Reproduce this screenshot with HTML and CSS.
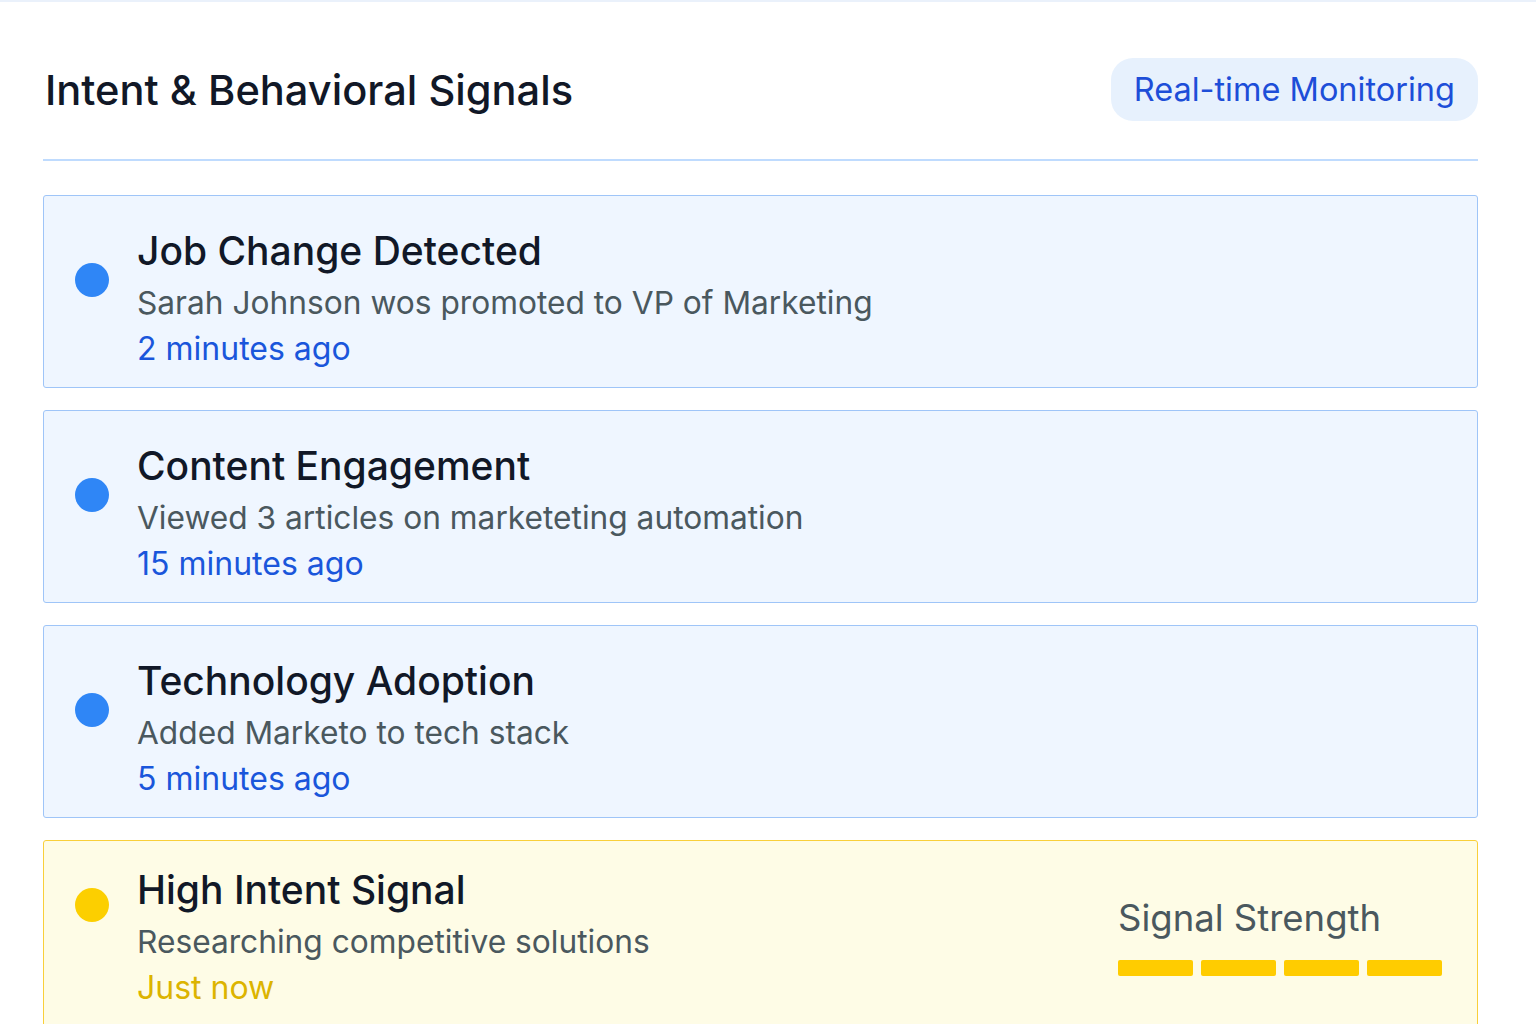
FILE: index.html
```html
<!DOCTYPE html>
<html lang="en">
<head>
    <meta charset="UTF-8">
    <meta name="viewport" content="width=device-width, initial-scale=1.0">
    <title>Intent &amp; Behavioral Signals</title>
    <link rel="stylesheet" href="styles.css">
</head>
<body>
    <div class="panel">
        <div class="panel-header">
            <h1>Intent &amp; Behavioral Signals</h1>
            <span class="badge">Real-time Monitoring</span>
        </div>

        <div class="signal-list">
            <div class="signal">
                <span class="dot"></span>
                <div class="signal-body">
                    <h2>Job Change Detected</h2>
                    <p class="desc">Sarah Johnson wos promoted to VP of Marketing</p>
                    <p class="time">2 minutes ago</p>
                </div>
            </div>

            <div class="signal">
                <span class="dot"></span>
                <div class="signal-body">
                    <h2>Content Engagement</h2>
                    <p class="desc">Viewed 3 articles on marketeting automation</p>
                    <p class="time">15 minutes ago</p>
                </div>
            </div>

            <div class="signal">
                <span class="dot"></span>
                <div class="signal-body">
                    <h2>Technology Adoption</h2>
                    <p class="desc">Added Marketo to tech stack</p>
                    <p class="time">5 minutes ago</p>
                </div>
            </div>

            <div class="signal signal-high">
                <span class="dot"></span>
                <div class="signal-body">
                    <h2>High Intent Signal</h2>
                    <p class="desc">Researching competitive solutions</p>
                    <p class="time">Just now</p>
                </div>
                <div class="strength">
                    <p class="strength-label">Signal Strength</p>
                    <div class="bars">
                        <span class="bar"></span>
                        <span class="bar"></span>
                        <span class="bar"></span>
                        <span class="bar"></span>
                    </div>
                </div>
            </div>
        </div>
    </div>
</body>
</html>
```

FILE: styles.css
```css
body {
    font-family: Inter, "Noto Sans", sans-serif;
    background-color: #ffffff;
    margin: 0;
    border-top: 2px solid #eaf1fb;
}
.panel {
    padding: 56px 58px 0 43px;
}
.panel-header {
    display: flex;
    justify-content: space-between;
    align-items: center;
    padding-bottom: 38px;
    border-bottom: 2px solid #bfdbfe;
}
h1 {
    margin: 0 0 0 2px;
    font-size: 41.6px;
    font-weight: 500;
    color: #111827;
}
.badge {
    background-color: #e7f1fd;
    color: #1d4ed8;
    font-size: 32.5px;
    padding: 12px 23px;
    border-radius: 22px;
}
.signal-list {
    display: flex;
    flex-direction: column;
    gap: 22px;
    margin-top: 34px;
}
.signal {
    display: flex;
    align-items: flex-start;
    padding: 29px 35px 15px 31px;
    background-color: #eff6ff;
    border: 1px solid #9fc5f8;
    border-radius: 3px;
}
.dot {
    flex: none;
    width: 34px;
    height: 34px;
    margin-top: 38px;
    margin-right: 28px;
    border-radius: 50%;
    background-color: #2f86f6;
}
.signal-body {
    flex: 1;
}
h2 {
    margin: 0;
    font-size: 39px;
    font-weight: 500;
    line-height: 52px;
    color: #111827;
}
.desc, .time {
    margin: 0;
    font-size: 32px;
    line-height: 46px;
}
.desc {
    margin-top: 3px;
    font-size: 31.7px;
    color: #4a585e;
}
.time {
    color: #1a56db;
}
.signal-high {
    background-color: #fefce6;
    border-color: #f9cf3a;
    padding-top: 23px;
}
.signal-high .dot {
    background-color: #fccf00;
    margin-top: 24px;
}
.signal-high .time {
    color: #dcb400;
}
.strength {
    margin-top: 32px;
}
.strength-label {
    margin: 0 0 20px 0;
    font-size: 36.5px;
    color: #4a585e;
}
.bars {
    display: flex;
    gap: 8px;
}
.bar {
    width: 75px;
    height: 16px;
    border-radius: 2px;
    background-color: #ffcc00;
}
```
